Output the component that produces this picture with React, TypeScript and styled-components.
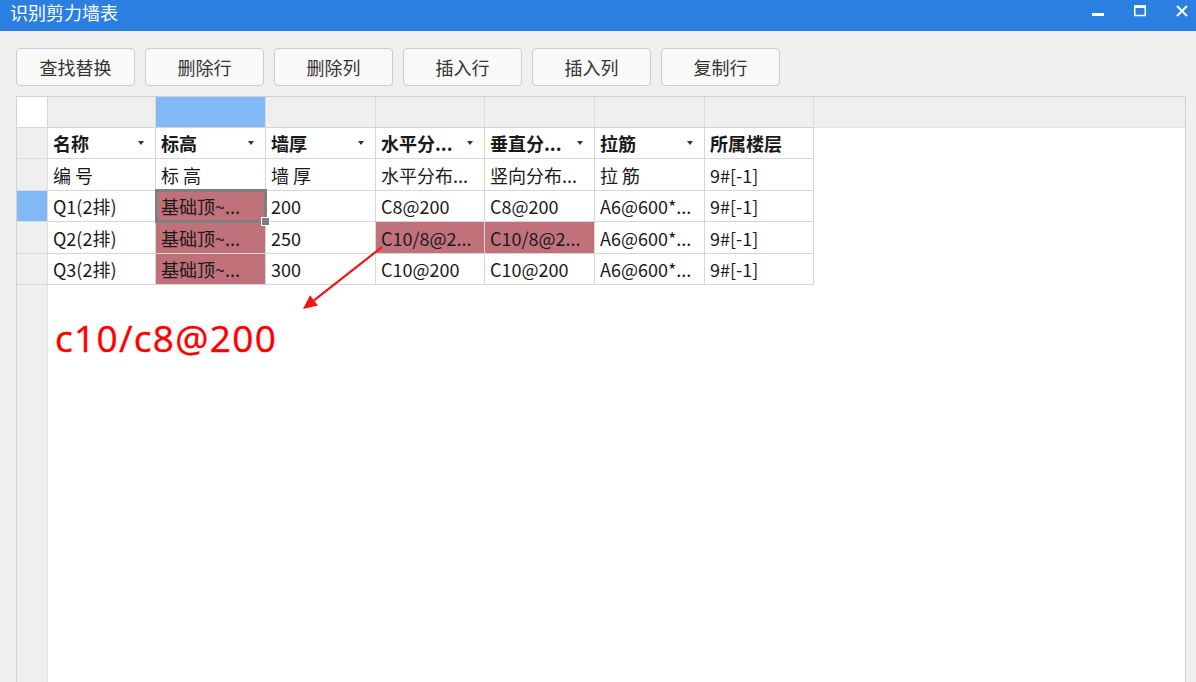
import React from "react";
import styled, { createGlobalStyle, css } from "styled-components";

const Global = createGlobalStyle`
  html, body, #root { margin: 0; padding: 0; height: 100%; }
  body { background: #f0f0f0; overflow: hidden; }
  * { box-sizing: border-box; }
`;

const FONT = `"Noto Sans CJK SC", "Noto Sans", sans-serif`;
const GRID = "#d6d6d6";
const HEAD_BG = "#efefef";
const SEL_BLUE = "#80b9f5";
const PINK = "#c0717a";

const Window = styled.div`
  height: 100vh;
  display: flex;
  flex-direction: column;
  overflow: hidden;
  background: #f0f0f0;
  font-family: ${FONT};
`;

const TitleBar = styled.div`
  height: 31px;
  flex: 0 0 31px;
  background: #2b7fe0;
  display: flex;
  align-items: flex-start;
  justify-content: space-between;
  padding: 0 8px 0 10px;
`;

const Title = styled.div`
  color: #ffffff;
  font-size: 18px;
  line-height: 24px;
`;

const Controls = styled.div`
  display: flex;
  align-items: center;
  gap: 30px;
  height: 22px;
`;

const CtrlIcon = styled.svg`
  width: 12px;
  height: 12px;
  display: block;
`;

const Toolbar = styled.div`
  display: flex;
  gap: 10px;
  padding: 17px 0 0 16px;
`;

const ToolButton = styled.button`
  width: 119px;
  height: 38px;
  border: 1px solid #c9cdd5;
  border-radius: 4px;
  background: #f9f9f9;
  color: #333333;
  font-family: ${FONT};
  font-size: 18px;
  padding: 0;
  display: flex;
  align-items: center;
  justify-content: center;
  cursor: default;
`;

const Sheet = styled.div`
  position: relative;
  flex: 1 0 auto;
  margin: 10px 10px -6px 16px;
  border: 1px solid #cfd3d9;
  background: #ffffff;
  display: grid;
  grid-template-columns: 31px 108px 110px 110px 109px 110px 110px 109px 1fr;
  grid-template-rows: 31px 31px 32px 31px 32px 31px 1fr;
`;

const Corner = styled.div`
  background: #ffffff;
  border-right: 1px solid ${GRID};
  border-bottom: 1px solid ${GRID};
`;

const ColHead = styled.div<{ $active?: boolean }>`
  background: ${(p) => (p.$active ? SEL_BLUE : HEAD_BG)};
  border-right: 1px solid #dcdcdc;
  border-bottom: 1px solid #d4d4d4;
`;

const ColHeadFill = styled.div`
  background: ${HEAD_BG};
  border-bottom: 1px solid #e4e4e4;
`;

const RowHead = styled.div<{ $active?: boolean }>`
  background: ${(p) => (p.$active ? SEL_BLUE : HEAD_BG)};
  border-right: 1px solid #dcdcdc;
  border-bottom: 1px solid #dcdcdc;
`;

const RowHeadFill = styled.div`
  background: ${HEAD_BG};
  border-right: 1px solid #e6e6e6;
`;

const Cell = styled.div<{ $hl?: boolean; $bold?: boolean; $sel?: boolean }>`
  position: relative;
  display: flex;
  align-items: center;
  justify-content: space-between;
  padding: 0 11px 0 5px;
  background: ${(p) => (p.$hl ? PINK : "#ffffff")};
  border-right: 1px solid ${GRID};
  border-bottom: 1px solid ${GRID};
  color: #1a1a1a;
  font-size: 18px;
  font-weight: ${(p) => (p.$bold ? 700 : 400)};
  white-space: pre;
  ${(p) =>
    p.$sel &&
    css`
      z-index: 2;
      &::after {
        content: "";
        position: absolute;
        top: -2px;
        left: -1px;
        right: -2px;
        bottom: -2px;
        border: 3px solid #7f7f7f;
        pointer-events: none;
      }
      &::before {
        content: "";
        position: absolute;
        right: -5px;
        bottom: -5px;
        width: 7px;
        height: 7px;
        background: #7f7f7f;
        border: 1px solid #ffffff;
        z-index: 3;
      }
    `}
`;

const CellText = styled.span`
  overflow: hidden;
`;

const RowFill = styled.div`
  background: #ffffff;
`;

const BodyFill = styled.div`
  grid-column: 2 / -1;
  background: #ffffff;
`;

const Caret = styled.svg`
  width: 6px;
  height: 4px;
  flex: 0 0 6px;
  display: block;
`;

const Note = styled.div`
  position: absolute;
  left: 38px;
  top: 222px;
  color: #ff0000;
  font-family: "Open Sans", "Noto Sans", sans-serif;
  font-size: 37px;
  line-height: 37px;
  letter-spacing: 1.3px;
  white-space: nowrap;
  -webkit-text-stroke: 0.4px #ff0000;
`;

const Arrow = styled.svg`
  position: absolute;
  left: 278px;
  top: 143px;
  width: 100px;
  height: 75px;
  overflow: visible;
`;

const DropCaret = () => (
  <Caret viewBox="0 0 6 4">
    <path d="M0 0 H6 L3 4 Z" fill="#333" />
  </Caret>
);

type Col = { title: string; drop: boolean };
const columns: Col[] = [
  { title: "名称", drop: true },
  { title: "标高", drop: true },
  { title: "墙厚", drop: true },
  { title: "水平分...", drop: true },
  { title: "垂直分...", drop: true },
  { title: "拉筋", drop: true },
  { title: "所属楼层", drop: false },
];

type Row = { cells: string[]; hl: number[]; sel?: number; active?: boolean };
const rows: Row[] = [
  { cells: ["编 号", "标 高", "墙 厚", "水平分布...", "竖向分布...", "拉 筋", "9#[-1]"], hl: [] },
  {
    cells: ["Q1(2排)", "基础顶~...", "200", "C8@200", "C8@200", "A6@600*...", "9#[-1]"],
    hl: [1],
    sel: 1,
    active: true,
  },
  {
    cells: ["Q2(2排)", "基础顶~...", "250", "C10/8@2...", "C10/8@2...", "A6@600*...", "9#[-1]"],
    hl: [1, 3, 4],
  },
  {
    cells: ["Q3(2排)", "基础顶~...", "300", "C10@200", "C10@200", "A6@600*...", "9#[-1]"],
    hl: [1],
  },
];

const buttons = ["查找替换", "删除行", "删除列", "插入行", "插入列", "复制行"];

export default function App() {
  return (
    <>
      <Global />
      <Window>
        <TitleBar>
          <Title>识别剪力墙表</Title>
          <Controls>
            <CtrlIcon viewBox="0 0 12 12">
              <rect x="0" y="8" width="12" height="3" fill="#fff" />
            </CtrlIcon>
            <CtrlIcon viewBox="0 0 12 12">
              <rect x="0.75" y="1" width="10.5" height="9.5" fill="none" stroke="#fff" strokeWidth="1.5" />
              <rect x="0" y="0.5" width="12" height="2.5" fill="#fff" />
            </CtrlIcon>
            <CtrlIcon viewBox="0 0 12 12">
              <path d="M1 1 L11 11 M11 1 L1 11" stroke="#fff" strokeWidth="2" />
            </CtrlIcon>
          </Controls>
        </TitleBar>

        <Toolbar>
          {buttons.map((b) => (
            <ToolButton key={b}>{b}</ToolButton>
          ))}
        </Toolbar>

        <Sheet>
          <Corner />
          {columns.map((c, i) => (
            <ColHead key={c.title} $active={i === 1} />
          ))}
          <ColHeadFill />

          <RowHead />
          {columns.map((c) => (
            <Cell key={c.title} $bold>
              <CellText>{c.title}</CellText>
              {c.drop && <DropCaret />}
            </Cell>
          ))}
          <RowFill />

          {rows.map((r, ri) => (
            <React.Fragment key={ri}>
              <RowHead $active={r.active} />
              {r.cells.map((t, ci) => (
                <Cell key={ci} $hl={r.hl.includes(ci)} $sel={r.sel === ci}>
                  <CellText>{t}</CellText>
                </Cell>
              ))}
              <RowFill />
            </React.Fragment>
          ))}

          <RowHeadFill />
          <BodyFill />

          <Arrow viewBox="295 240 100 75">
            <line x1="382" y1="247" x2="314" y2="300.4" stroke="#f21414" strokeWidth="2.2" />
            <path d="M303 309 L318 305.5 L310 295.3 Z" fill="#f21414" />
          </Arrow>
          <Note>c10/c8@200</Note>
        </Sheet>
      </Window>
    </>
  );
}
